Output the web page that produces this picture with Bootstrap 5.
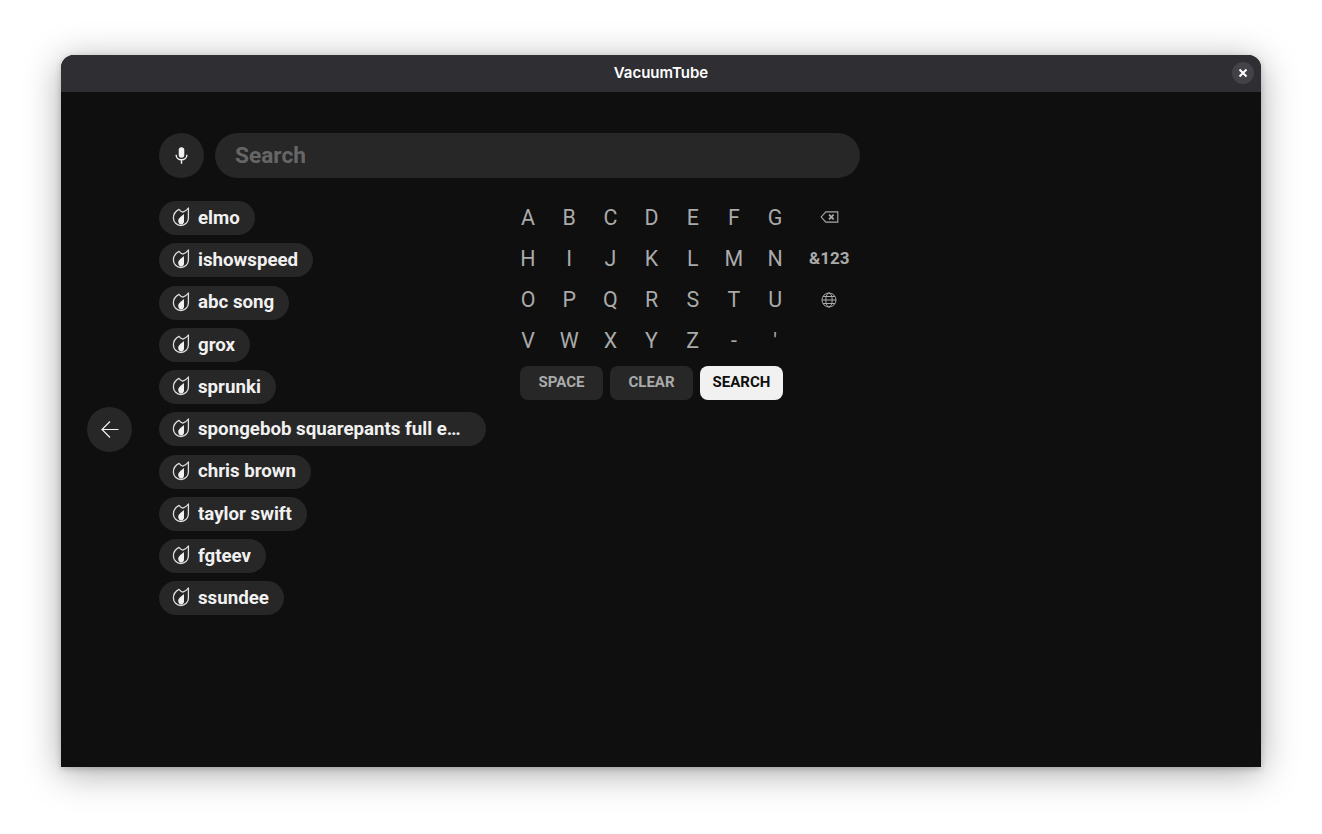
<!DOCTYPE html>
<html lang="en">
<head>
  <meta charset="UTF-8">
  <meta name="viewport" content="width=device-width, initial-scale=1">
  <title>VacuumTube</title>
  <link href="https://cdn.jsdelivr.net/npm/bootstrap@5.3.0/dist/css/bootstrap.min.css" rel="stylesheet">
  <style>
    html, body { height: 100%; overflow: hidden; }
    body { background: #fff; font-family: Roboto, sans-serif; }
    .app-window {
      width: 1200px; height: 712px; margin: 55px auto 0;
      background: #0f0f0f; border-radius: 13px 13px 0 0;
      box-shadow: 0 6px 36px rgba(0,0,0,.34), 0 2px 6px rgba(0,0,0,.2);
    }
    .app-titlebar { height: 37px; background: #2e2e33; border-radius: 13px 13px 0 0; color: #fff; font-family: Inter, sans-serif; font-size: 15px; font-weight: 600; }
    .close-btn { right: 7px; top: 7px; width: 22px; height: 22px; background: #434347; border: 0; padding: 0; }
    .app-main { height: 675px; padding-left: 26px; gap: 27px; }
    .round-btn { width: 45px; height: 45px; background: #272727; border: 0; padding: 0; flex: none; }
    .search-pane { width: 710px; padding-top: 41px; }
    .search-box { height: 45px; border-radius: 23px; background: #272727; color: #666; font-size: 22.7px; font-weight: 700; padding: 2px 0 0 20px; }
    .search-row { width: 701px; gap: 11px; margin-bottom: 19px; }
    .suggest-col { width: 348.4px; padding-top: 4px; gap: 8.25px; }
    .suggest-pill { height: 34px; max-width: 327px; border-radius: 17px; background: #272727; color: #f1f1f1; font-size: 18.7px; font-weight: 700; padding: 0 25px 0 13px; gap: 8px; }
    .suggest-pill.short { padding-right: 15px; }
    .suggest-pill svg { flex: none; margin-top: -2px; }
    .suggest-text { overflow: hidden; white-space: nowrap; text-overflow: ellipsis; }
    .key-grid { display: grid; grid-template-columns: repeat(7, 41.2px) 67px; grid-auto-rows: 41.3px; }
    .key-cell { color: #aaa; font-size: 21.4px; }
    .key-cell.sym { font-size: 17px; font-weight: 700; }
    .key-cell.sym svg { margin-top: -1px; }
    .key-actions { gap: 7px; margin: 4px 0 0 12.6px; }
    .key-btn { width: 83px; height: 34px; border-radius: 8px; background: #272727; color: #aaa; font-size: 15px; font-weight: 700; border: 0; padding: 0 0 2px; }
    .key-btn.on { background: #f1f1f1; color: #0f0f0f; }
  </style>
</head>
<body>
  <svg width="0" height="0" class="d-block position-absolute">
    <symbol id="flame" viewBox="0 0 18 20">
      <path d="M7 2.4C3.6 4.2 1.4 7.2 1.4 11a7.5 7.5 0 0 0 15 0V1C15 3 12.8 4.4 10.8 5.2 9.4 4.8 8 3.6 7 2.4Z" fill="none" stroke="#ddd" stroke-width="1.3" stroke-linejoin="round"/>
      <path d="M12 7C10 9.2 6.2 10.8 6.2 13.8a3.6 3.6 0 0 0 3.6 3.6c1.5-.3 2.2-1.4 2.2-2.8Z" fill="#f1f1f1"/>
    </symbol>
  </svg>

  <div class="app-window">
    <div class="app-titlebar position-relative d-flex align-items-center justify-content-center">
      <span>VacuumTube</span>
      <button class="close-btn position-absolute rounded-circle d-flex align-items-center justify-content-center" aria-label="Close">
        <svg width="10" height="10" viewBox="0 0 10 10"><path d="M1.5 1.5l7 7M8.5 1.5l-7 7" stroke="#fff" stroke-width="2"/></svg>
      </button>
    </div>

    <div class="app-main d-flex">
      <button class="round-btn rounded-circle align-self-center d-flex align-items-center justify-content-center" aria-label="Back">
        <svg width="18" height="18" viewBox="0 0 18 18"><path d="M17.5 8.5H1M9 .5l-8 8 8 8" fill="none" stroke="#f1f1f1" stroke-width="1.2"/></svg>
      </button>

      <div class="search-pane">
        <div class="search-row d-flex">
          <button class="round-btn rounded-circle d-flex align-items-center justify-content-center" aria-label="Voice">
            <svg width="13" height="17" viewBox="0 0 14 18"><path d="M7 0a3 3 0 0 0-3 3v5.5a3 3 0 0 0 6 0V3a3 3 0 0 0-3-3Z" fill="#f1f1f1"/><path d="M1.2 8.2c0 3.2 2.6 5.4 5.8 5.4s5.8-2.2 5.8-5.4M7 13.6V18" fill="none" stroke="#f1f1f1" stroke-width="1.5"/></svg>
          </button>
          <div class="search-box flex-grow-1 d-flex align-items-center">Search</div>
        </div>

        <div class="d-flex">
          <div class="suggest-col flex-shrink-0 d-flex flex-column align-items-start" id="suggestions"></div>

          <div>
            <div class="key-grid" id="keys"></div>
            <div class="key-actions d-flex">
              <button class="key-btn">SPACE</button>
              <button class="key-btn">CLEAR</button>
              <button class="key-btn on">SEARCH</button>
            </div>
          </div>
        </div>
      </div>
    </div>
  </div>

  <script>
    const terms = ['elmo', 'ishowspeed', 'abc song', 'grox', 'sprunki', 'spongebob squarepants full episodes', 'chris brown', 'taylor swift', 'fgteev', 'ssundee'];
    document.getElementById('suggestions').innerHTML = terms.map(t =>
      `<div class="suggest-pill ${t.length < 20 ? 'short' : ''} d-flex align-items-center"><svg width="18" height="20"><use href="#flame"/></svg><span class="suggest-text">${t}</span></div>`
    ).join('');

    const backspace = '<svg width="19" height="12" viewBox="0 0 20 13"><path d="M19 1H6L1 6.5 6 12h13Z" fill="none" stroke="#aaa" stroke-width="1.2"/><path d="M9.5 4l5 5M14.5 4l-5 5" stroke="#aaa" stroke-width="1.9"/></svg>';
    const globe = '<svg width="16" height="16" viewBox="0 0 16 16" fill="none" stroke="#aaa"><circle cx="8" cy="8" r="7"/><ellipse cx="8" cy="8" rx="3.2" ry="7"/><path d="M1 8h14M2 4.5h12M2 11.5h12"/></svg>';
    const rows = ['ABCDEFG', 'HIJKLMN', 'OPQRSTU', "VWXYZ-'"];
    const extra = [backspace, '&amp;123', globe, ''];
    document.getElementById('keys').innerHTML = rows.map((r, i) =>
      [...r].map(c => `<div class="key-cell d-flex align-items-center justify-content-center">${c}</div>`).join('') +
      `<div class="key-cell sym d-flex align-items-center justify-content-center">${extra[i]}</div>`
    ).join('');
  </script>
  <script src="https://cdn.jsdelivr.net/npm/bootstrap@5.3.0/dist/js/bootstrap.bundle.min.js"></script>
</body>
</html>
